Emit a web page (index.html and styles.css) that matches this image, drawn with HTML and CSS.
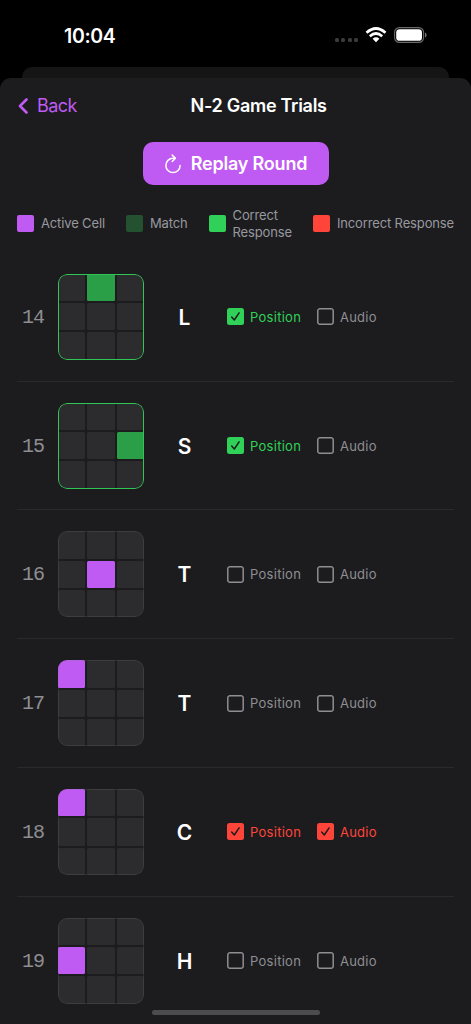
FILE: index.html
```html
<!DOCTYPE html>
<html lang="en">
<head>
<meta charset="utf-8">
<title>N-2 Game Trials</title>
<link rel="stylesheet" href="styles.css">
</head>
<body>
<svg class="defs" width="0" height="0"><symbol id="check" viewBox="0 0 17 17"><path d="M4.700 9.100 7.300 12 12.100 4.800" fill="none" stroke="#1c1c1e" stroke-width="1.5" stroke-linecap="round" stroke-linejoin="round"/></symbol><symbol id="empty" viewBox="0 0 17 17"><rect x=".8" y=".8" width="15.400" height="15.400" rx="2" fill="none" stroke="#8e8e93" stroke-width="1.5"/></symbol></svg>
<div class="screen">
  <div class="status">
    <span class="time">10:04</span>
    <div class="status-icons">
      <span class="dots"><i></i><i></i><i></i><i></i></span>
      <svg class="wifi" width="22" height="16" viewBox="0 0 22 16"><g fill="none" stroke="#fff" stroke-width="2.7"><path d="M1.500 5.700Q11-2.700 20.500 5.700"/><path d="M4.800 9.200Q11 3.800 17.200 9.200"/></g><path d="M7.600 11.700Q11 8.900 14.400 11.700L11 15.200Z" fill="#fff"/></svg>
      <svg class="battery" width="33" height="16" viewBox="0 0 33 16"><rect x=".6" y=".6" width="29" height="14.800" rx="4.800" fill="none" stroke="#6b6b6b" stroke-width="1.1"/><rect x="2.2" y="2.2" width="25.800" height="11.600" rx="3.400" fill="#fff"/><path d="M31 5.500Q32.600 6.200 32.600 8T31 10.500Z" fill="#777"/></svg>
    </div>
  </div>
  <div class="sheet-behind"></div>
  <main class="sheet">
    <header class="nav">
      <a class="back"><svg width="10" height="16" viewBox="0 0 10 16"><path d="M8.500 1.500 2 8l6.500 6.500" fill="none" stroke="#bf5af2" stroke-width="2.6" stroke-linecap="round" stroke-linejoin="round"/></svg><span>Back</span></a>
      <h1>N-2 Game Trials</h1>
    </header>
    <button class="replay"><svg width="18" height="20" viewBox="0 0 18 20"><g fill="none" stroke="#fff" stroke-width="1.5" stroke-linecap="round" stroke-linejoin="round"><path d="M11 4.300H9A7.100 7.100 0 1 0 16.100 11.400"/><path d="M8.200 1.100 11.400 4.300 8.200 7.500"/></g></svg><span>Replay Round</span></button>
    <div class="legend">
      <div class="key active"><i></i><span>Active Cell</span></div>
      <div class="key match"><i></i><span>Match</span></div>
      <div class="key correct"><i></i><span>Correct<br>Response</span></div>
      <div class="key incorrect"><i></i><span>Incorrect Response</span></div>
    </div>
    <section class="trials">
      <div class="trial"><span class="num">14</span><div class="board hit"><i></i><i class="on"></i><i></i><i></i><i></i><i></i><i></i><i></i><i></i></div><b class="letter">L</b><div class="answer good position"><svg class="box"><use href="#check"/></svg><span>Position</span></div><div class="answer"><svg class="box"><use href="#empty"/></svg><span>Audio</span></div></div>
      <div class="trial"><span class="num">15</span><div class="board hit"><i></i><i></i><i></i><i></i><i></i><i class="on"></i><i></i><i></i><i></i></div><b class="letter">S</b><div class="answer good position"><svg class="box"><use href="#check"/></svg><span>Position</span></div><div class="answer"><svg class="box"><use href="#empty"/></svg><span>Audio</span></div></div>
      <div class="trial"><span class="num">16</span><div class="board"><i></i><i></i><i></i><i></i><i class="on"></i><i></i><i></i><i></i><i></i></div><b class="letter">T</b><div class="answer position"><svg class="box"><use href="#empty"/></svg><span>Position</span></div><div class="answer"><svg class="box"><use href="#empty"/></svg><span>Audio</span></div></div>
      <div class="trial"><span class="num">17</span><div class="board"><i class="on"></i><i></i><i></i><i></i><i></i><i></i><i></i><i></i><i></i></div><b class="letter">T</b><div class="answer position"><svg class="box"><use href="#empty"/></svg><span>Position</span></div><div class="answer"><svg class="box"><use href="#empty"/></svg><span>Audio</span></div></div>
      <div class="trial"><span class="num">18</span><div class="board"><i class="on"></i><i></i><i></i><i></i><i></i><i></i><i></i><i></i><i></i></div><b class="letter">C</b><div class="answer bad position"><svg class="box"><use href="#check"/></svg><span>Position</span></div><div class="answer bad"><svg class="box"><use href="#check"/></svg><span>Audio</span></div></div>
      <div class="trial"><span class="num">19</span><div class="board"><i></i><i></i><i></i><i class="on"></i><i></i><i></i><i></i><i></i><i></i></div><b class="letter">H</b><div class="answer position"><svg class="box"><use href="#empty"/></svg><span>Position</span></div><div class="answer"><svg class="box"><use href="#empty"/></svg><span>Audio</span></div></div>
    </section>
  </main>
  <div class="home-indicator"></div>
</div>
</body>
</html>
```
FILE: styles.css
```css
* { box-sizing: border-box; }
body { margin: 0; background: #000; font-family: Inter, "Liberation Sans", sans-serif; }
i { display: block; }
svg { display: block; flex: none; }
.defs { position: absolute; }
.screen { position: relative; width: 471px; height: 1024px; overflow: hidden; display: flex; flex-direction: column; background: #000; }
.status { flex: none; height: 67px; padding: 2px 44px 0 64px; display: flex; align-items: center; justify-content: space-between; color: #fff; }
.time { font-size: 19.5px; font-weight: 600; letter-spacing: -0.35px; line-height: 24px; padding-top: 2px; }
.status-icons { display: flex; align-items: center; }
.dots { display: flex; gap: 2.4px; padding-top: 11px; margin-right: 7px; }
.dots i { width: 4px; height: 4px; border-radius: 1.5px; background: #3b3b3b; }
.wifi { margin-right: 7px; }
.sheet-behind { flex: none; height: 10.5px; margin: 0 22px; border-radius: 10px 10px 0 0; background: #151515; }
.sheet { flex: 1; min-height: 0; display: flex; flex-direction: column; align-items: center; border-radius: 11px 11px 0 0; background: #1c1c1e; }
.nav { flex: none; width: 100%; height: 56px; padding: 0 18px; display: grid; grid-template-columns: 172.5px 1fr; align-items: center; }
.back { display: flex; align-items: center; gap: 9px; color: #bf5af2; font-size: 18px; letter-spacing: -0.55px; }
.nav h1 { margin: 0; font-size: 18px; font-weight: 600; color: #fff; letter-spacing: -0.28px; }
.replay { flex: none; margin-top: 8.5px; width: 186px; height: 43px; padding: 0; border: 0; border-radius: 10px; background: #bf5af2; color: #fff; display: flex; align-items: center; justify-content: center; gap: 9px; font: 600 18px Inter, sans-serif; letter-spacing: -0.2px; }
.legend { flex: none; width: 100%; height: 67.9px; padding: 9.5px 17px 0; display: flex; justify-content: space-between; align-items: center; color: #98989f; font-size: 13px; letter-spacing: -0.14px; line-height: 17px; white-space: nowrap; }
.key { display: flex; align-items: center; gap: 7px; }
.key i { width: 17px; height: 17px; border-radius: 2px; flex: none; }
.active i { background: #bf5af2; }
.match i { background: #24512f; }
.correct i { background: #30d158; }
.incorrect i { background: #ff453a; }
.trials { width: 437px; flex: none; }
.trial { height: 128.8px; padding-left: 5px; display: flex; align-items: center; border-bottom: 1px solid #2a2a2c; }
.trial:last-child { border-color: transparent; }
.num { width: 36px; padding-top: 2px; font: 20px/22px "Liberation Mono", monospace; letter-spacing: -1px; color: #8e8e93; }
.board { position: relative; width: 86px; height: 86px; overflow: hidden; border-radius: 9px; display: grid; grid-template: repeat(3, 1fr) / repeat(3, 1fr); gap: 2px; }
.board::after { content: ""; position: absolute; inset: 0; border: 1px solid rgba(130,130,135,.2); border-radius: 9px; }
.board.hit::after { border-color: #30c555; }
.board i { background: #2c2c2e; border-radius: 1.5px; }
.board .on { background: #bf5af2; }
.board.hit .on { background: #2b9e48; }
.letter { width: 83px; padding: 1px 2px 0 0; text-align: center; font-size: 21px; font-weight: 600; color: #fff; }
.answer { display: flex; align-items: center; gap: 6px; color: #8e8e93; font-size: 13px; letter-spacing: 0.22px; }
.position { width: 90px; letter-spacing: 0.28px; }
.box { width: 17px; height: 17px; border-radius: 2.5px; }
.good { color: #30d158; }
.good .box { background: #30d158; }
.bad { color: #ff453a; }
.bad .box { background: #ff453a; }
.home-indicator { position: absolute; left: 152px; top: 1010px; width: 168px; height: 5px; border-radius: 3px; background: #4c4c4d; }
```
